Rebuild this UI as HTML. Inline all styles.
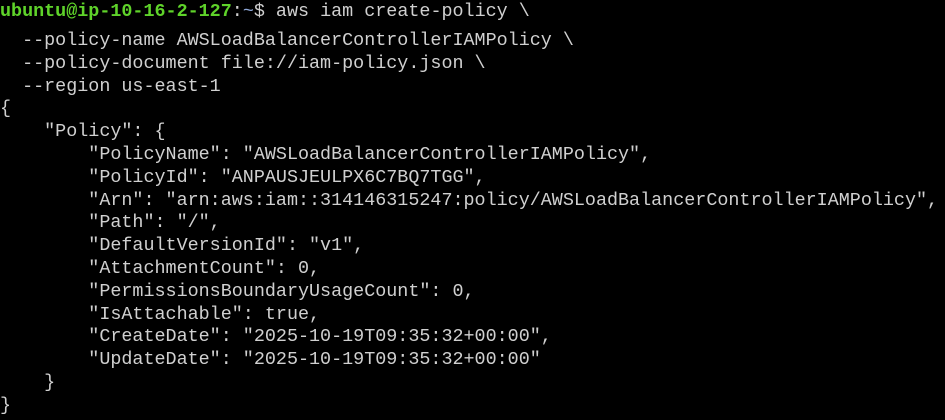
<!DOCTYPE html>
<html><head><style>
html,body{margin:0;padding:0;background:#000;width:945px;height:420px;overflow:hidden}
pre{margin:0;position:absolute;left:0;font-family:"Liberation Mono",monospace;font-size:18.4px;line-height:22.8px;color:#d0d0d0;white-space:pre}
.g{color:#5fd32a;font-weight:bold}
.b{color:#8fa8d8}
</style></head><body>
<pre style="top:1px"><span class="g">ubuntu@ip-10-16-2-127</span>:<span class="b">~</span>$ aws iam create-policy \</pre>
<pre style="top:30px">  --policy-name AWSLoadBalancerControllerIAMPolicy \
  --policy-document file://iam-policy.json \
  --region us-east-1
{
    "Policy": {
        "PolicyName": "AWSLoadBalancerControllerIAMPolicy",
        "PolicyId": "ANPAUSJEULPX6C7BQ7TGG",
        "Arn": "arn:aws:iam::314146315247:policy/AWSLoadBalancerControllerIAMPolicy",
        "Path": "/",
        "DefaultVersionId": "v1",
        "AttachmentCount": 0,
        "PermissionsBoundaryUsageCount": 0,
        "IsAttachable": true,
        "CreateDate": "2025-10-19T09:35:32+00:00",
        "UpdateDate": "2025-10-19T09:35:32+00:00"
    }
}</pre>
</body></html>
